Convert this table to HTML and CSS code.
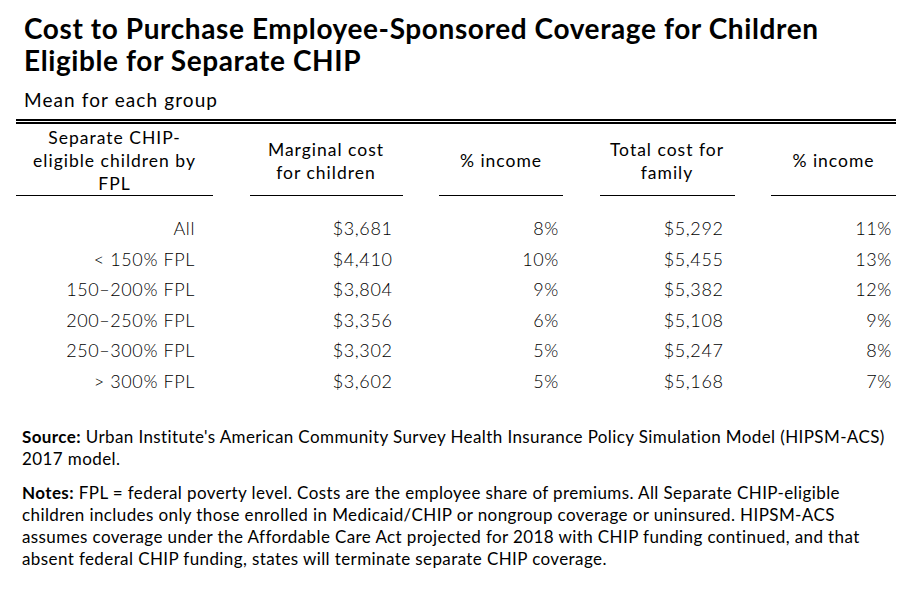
FILE: index.html
```html
<!DOCTYPE html>
<html lang="en">
<head>
<meta charset="utf-8">
<title>Cost to Purchase Employee-Sponsored Coverage</title>
<link rel="stylesheet" href="styles.css">
</head>
<body>
<div class="page">
  <header class="heading">
    <h1 class="title">Cost to Purchase Employee-Sponsored Coverage for Children Eligible for Separate CHIP</h1>
    <p class="subtitle">Mean for each group</p>
  </header>
  <div class="table">
    <div class="rule-double"></div>
    <div class="grid head">
      <div class="hcell">Separate CHIP-<br>eligible children by<br>FPL</div>
      <div class="hcell">Marginal cost<br>for children</div>
      <div class="hcell">% income</div>
      <div class="hcell">Total cost for<br>family</div>
      <div class="hcell">% income</div>
    </div>
    <div class="body">
      <div class="grid row"><div class="c1">All</div><div class="c2">$3,681</div><div class="c3">8%</div><div class="c4">$5,292</div><div class="c5">11%</div></div>
      <div class="grid row"><div class="c1">&lt; 150% FPL</div><div class="c2">$4,410</div><div class="c3">10%</div><div class="c4">$5,455</div><div class="c5">13%</div></div>
      <div class="grid row"><div class="c1">150–200% FPL</div><div class="c2">$3,804</div><div class="c3">9%</div><div class="c4">$5,382</div><div class="c5">12%</div></div>
      <div class="grid row"><div class="c1">200–250% FPL</div><div class="c2">$3,356</div><div class="c3">6%</div><div class="c4">$5,108</div><div class="c5">9%</div></div>
      <div class="grid row"><div class="c1">250–300% FPL</div><div class="c2">$3,302</div><div class="c3">5%</div><div class="c4">$5,247</div><div class="c5">8%</div></div>
      <div class="grid row"><div class="c1">&gt; 300% FPL</div><div class="c2">$3,602</div><div class="c3">5%</div><div class="c4">$5,168</div><div class="c5">7%</div></div>
    </div>
  </div>
  <footer class="notes">
    <p class="note"><b class="label">Source:</b> Urban Institute's American Community Survey Health Insurance Policy Simulation Model (HIPSM-ACS) 2017 model.</p>
    <p class="note"><b class="label">Notes:</b> FPL = federal poverty level. Costs are the employee share of premiums. All Separate CHIP-eligible children includes only those enrolled in Medicaid/CHIP or nongroup coverage or uninsured. HIPSM-ACS assumes coverage under the Affordable Care Act projected for 2018 with CHIP funding continued, and that absent federal CHIP funding, states will terminate separate CHIP coverage.</p>
  </footer>
</div>
</body>
</html>
```
FILE: styles.css
```css
html, body {
  margin: 0;
  padding: 0;
  background: #fff;
}
body {
  font-family: Lato, "Liberation Sans", sans-serif;
  color: #000;
}
.page {
  width: 916px;
  height: 590px;
  padding-top: 12px;
  box-sizing: border-box;
}
.heading {
  padding-left: 24px;
}
.title {
  margin: 0;
  font-size: 28px;
  line-height: 32px;
  font-weight: 700;
  letter-spacing: 0.6px;
  width: 860px;
}
.subtitle {
  margin: 12px 0 0;
  font-size: 19px;
  line-height: 24px;
  font-weight: 400;
  letter-spacing: 1.1px;
}
.table {
  margin: 7px 0 0 16px;
  width: 880px;
}
.rule-double {
  height: 1px;
  border-top: 2px solid #000;
  border-bottom: 2px solid #000;
}
.grid {
  display: grid;
  grid-template-columns: 197px 153px 124px 135px 125px;
  column-gap: 36.5px;
}
.head {
  height: 72px;
}
.hcell {
  border-bottom: 1px solid #000;
  display: flex;
  align-items: center;
  justify-content: center;
  padding-top: 2px;
  text-align: center;
  font-size: 17.5px;
  line-height: 23px;
  letter-spacing: 1px;
}
.body {
  padding-top: 17px;
}
.row {
  height: 30.6px;
  font-size: 18px;
  font-weight: 300;
  line-height: 30px;
  letter-spacing: 0.6px;
  text-align: right;
}
.c1 { padding-right: 18px; }
.c2 { padding-right: 10px; }
.c3 { padding-right: 4px; }
.c4 { padding-right: 11px; }
.c5 { padding-right: 4px; }
.notes {
  margin-top: 29px;
  padding-left: 22px;
  width: 874px;
}
.note {
  margin: 0 0 12px;
  font-size: 17px;
  line-height: 22px;
  letter-spacing: 0.4px;
}
.label {
  font-weight: 700;
  letter-spacing: 0.4px;
}
```
